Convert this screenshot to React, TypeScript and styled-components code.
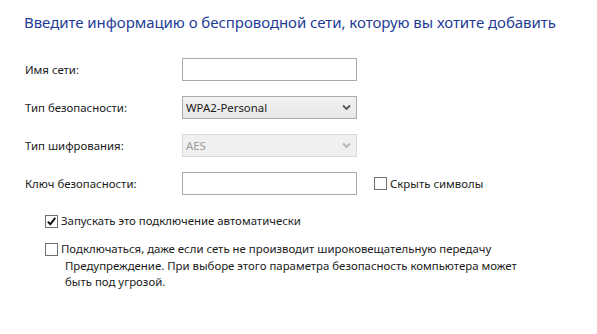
import React from "react";
import styled, { createGlobalStyle } from "styled-components";

const Global = createGlobalStyle`
  html, body { margin: 0; padding: 0; background: #ffffff; }
  body { font-family: "Noto Sans", "Open Sans", sans-serif; color: #1a1a1a; }
`;

const Page = styled.div`
  width: 597px;
  height: 334px;
  box-sizing: border-box;
  padding: 12px 0 0 24px;
  background: #fff;
`;

const Title = styled.h1`
  margin: 0 0 26px 0;
  font-size: 15px;
  font-weight: 400;
  line-height: 20px;
  color: #1e3c96;
  letter-spacing: -0.05px;
`;

const Form = styled.div`
  display: grid;
  grid-template-columns: 158px 175px auto;
  row-gap: 15px;
  align-items: center;
`;

const Label = styled.div`
  font-size: 11.4px;
  line-height: 23px;
  color: #1a1a1a;
  padding-left: 1px;
`;

const TextBox = styled.div`
  box-sizing: border-box;
  height: 23px;
  border: 1px solid #ababab;
  background: #fff;
`;

const Select = styled.div<{ $disabled?: boolean }>`
  box-sizing: border-box;
  height: 23px;
  border: 1px solid ${(p) => (p.$disabled ? "#d9d9d9" : "#acacac")};
  background: ${(p) =>
    p.$disabled ? "#f0f0f0" : "linear-gradient(#f2f2f2, #e6e6e6)"};
  display: flex;
  align-items: center;
  justify-content: space-between;
  padding: 0 5px 0 3px;
  font-size: 11.4px;
  color: ${(p) => (p.$disabled ? "#9a9a9a" : "#1a1a1a")};
`;

const Chevron = ({ color }: { color: string }) => (
  <svg width="9" height="7" viewBox="0 0 9 7">
    <path d="M1 1.5 L4.5 5 L8 1.5" fill="none" stroke={color} strokeWidth="1.8" />
  </svg>
);

const CheckRow = styled.label<{ $indent?: number }>`
  display: flex;
  align-items: center;
  gap: 3px;
  font-size: 11.4px;
  line-height: 16px;
  color: #1a1a1a;
  margin-left: ${(p) => p.$indent ?? 0}px;
`;

const Box = styled.span`
  box-sizing: border-box;
  width: 13px;
  height: 13px;
  border: 1px solid #707070;
  background: #fff;
  display: inline-flex;
  align-items: center;
  justify-content: center;
  flex: none;
`;

const Options = styled.div`
  margin-top: 18px;
  margin-left: 21px;
  display: flex;
  flex-direction: column;
  gap: 12px;
`;

const Warning = styled.p`
  margin: -11px 0 0 20px;
  font-size: 11.4px;
  line-height: 16px;
  color: #1a1a1a;
  width: 470px;
`;

const Check = ({ checked }: { checked?: boolean }) => (
  <Box>
    {checked && (
      <svg width="11" height="11" viewBox="0 0 11 11">
        <path d="M1.8 5.6 L4.3 8.2 L9.3 1.8" fill="none" stroke="#111" strokeWidth="1.9" />
      </svg>
    )}
  </Box>
);

export default function App() {
  return (
    <Page>
      <Global />
      <Title>Введите информацию о беспроводной сети, которую вы хотите добавить</Title>
      <Form>
        <Label>Имя сети:</Label>
        <TextBox />
        <span />
        <Label>Тип безопасности:</Label>
        <Select>
          WPA2-Personal
          <Chevron color="#555" />
        </Select>
        <span />
        <Label>Тип шифрования:</Label>
        <Select $disabled>
          AES
          <Chevron color="#b5b5b5" />
        </Select>
        <span />
        <Label>Ключ безопасности:</Label>
        <TextBox />
        <CheckRow $indent={17}>
          <Check />
          Скрыть символы
        </CheckRow>
      </Form>
      <Options>
        <CheckRow>
          <Check checked />
          Запускать это подключение автоматически
        </CheckRow>
        <CheckRow>
          <Check />
          Подключаться, даже если сеть не производит широковещательную передачу
        </CheckRow>
        <Warning>
          Предупреждение. При выборе этого параметра безопасность компьютера может
          <br />
          быть под угрозой.
        </Warning>
      </Options>
    </Page>
  );
}
